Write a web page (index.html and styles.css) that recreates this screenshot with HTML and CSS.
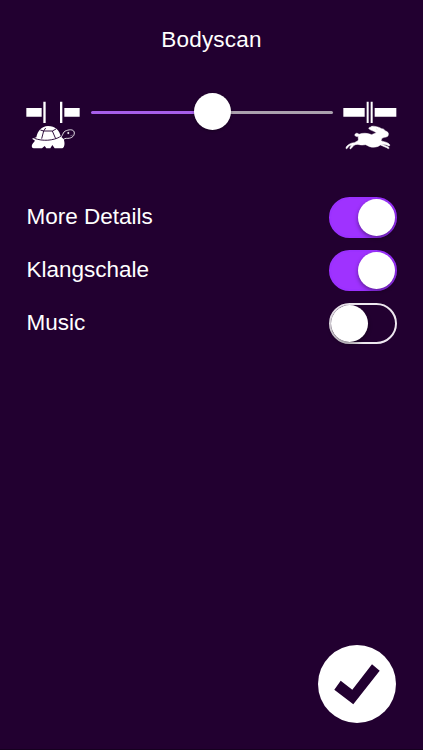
FILE: index.html
```html
<!DOCTYPE html>
<html lang="en">
<head>
<meta charset="utf-8">
<title>Bodyscan</title>
<link rel="stylesheet" href="styles.css">
</head>
<body>
<main class="screen">
  <h1 class="title">Bodyscan</h1>
  <section class="speed">
    <svg class="speed-icon" viewBox="18 18 162 147" aria-label="Slow">
      <g fill="#fff">
        <path d="M19 39h46v26H19zM70 20h7v64h-7zM120 20h7v64h-7zM133 39h46v26h-46z"/>
        <path d="M49 127C53 107 65 94 84 93C106 93 119 106 122 124L131 133C135 143 135 157 127 160H104L97 150L91 160H79L74 153L66 160H41C34 160 34 150 39 145L45 137L36 131Z"/>
      </g>
      <g fill="none" stroke="#220030" stroke-width="2.8">
        <path d="M61 105L71 108L65 131M71 108L77 99M71 108H97L108 102M97 108L107 131M43 130C68 139 99 138 123 124"/>
      </g>
      <path d="M119 128C129 127 127 109 139 107C151 102 163 104 163 114C163 126 151 131 139 130C132 130 128 137 121 137" fill="none" stroke="#fff" stroke-width="2.6"/>
      <path d="M143 112h4v4h-4zM151 122l9-2" fill="#fff" stroke="#fff" stroke-width="1"/>
    </svg>
    <div class="slider"><div class="knob"></div></div>
    <svg class="speed-icon" viewBox="16 18 162 147" aria-label="Fast">
      <g fill="#fff" stroke="#fff" stroke-linejoin="round">
        <path stroke="none" d="M17 39h64v26H17zM87 20h6v64h-6zM99 20h6v64h-6zM111 39h65v26h-65z"/>
        <path stroke-width="1.5" d="M52 118C55 113 60 114 64 118C76 113 87 114 102 119L116 113C107 107 94 105 93 99C98 93 112 97 120 105C115 97 99 98 101 94C109 92 124 96 132 101C139 101 142 106 143 108C152 110 155 117 150 124C144 128 136 126 132 131L130 137C139 141 151 141 156 149C157 154 153 154 148 150L131 147L151 155C158 161 153 163 147 158L128 150C120 157 107 158 96 155L84 149L73 150C62 149 57 146 49 151L41 160C37 164 35 160 38 156L42 150L34 153L29 160C25 163 23 160 27 154C34 147 41 143 50 143L61 137C64 133 60 129 62 124C55 126 50 123 52 118Z"/>
      </g>
    </svg>
  </section>
  <section class="options">
    <div class="option"><span class="label">More Details</span><div class="toggle on"></div></div>
    <div class="option"><span class="label">Klangschale</span><div class="toggle on"></div></div>
    <div class="option"><span class="label">Music</span><div class="toggle"></div></div>
  </section>
  <button class="confirm" aria-label="Confirm">
    <svg viewBox="0 0 78 78"><path d="M22.7 35.7L34.3 44.7L54 19.3L61.7 25.7L35.3 59.3L16.3 44.7Z" fill="#220030"/></svg>
  </button>
</main>
</body>
</html>
```
FILE: styles.css
```css
* { box-sizing: border-box; }
body { margin: 0; background: #220030; }
.screen {
  display: flex;
  flex-direction: column;
  height: 750px;
  padding: 26px 26px 26px;
  border-bottom: 1px solid #16001f;
  color: #fff;
  font: 22.5px/28px "Liberation Sans", sans-serif;
}
.title {
  margin: 0;
  font-size: 22.5px;
  font-weight: 400;
  letter-spacing: 0.2px;
  text-align: center;
}
.speed {
  display: flex;
  gap: 10.5px;
  height: 49px;
  margin-top: 47px;
}
.speed-icon { flex: none; width: 54px; height: 49px; }
.slider {
  display: flex;
  flex: 1;
  align-items: center;
  justify-content: center;
  height: 3px;
  margin-top: 10px;
  border-radius: 2px;
  background: linear-gradient(to right, #a75eea 50%, #aaa0ad 50%);
}
.knob {
  flex: none;
  width: 37px;
  height: 37px;
  margin: -2px 0 0 1px;
  border-radius: 50%;
  background: #fff;
  box-shadow: 0 1px 3px rgba(0, 0, 0, 0.35);
}
.options {
  display: grid;
  gap: 12px;
  margin-top: 47px;
}
.option {
  display: flex;
  align-items: center;
  justify-content: space-between;
  height: 41px;
}
.label { padding: 0 0 2px 0.5px; }
.toggle {
  display: flex;
  align-items: center;
  width: 68px;
  height: 41px;
  border: 2px solid #eee8f0;
  border-radius: 21px;
}
.toggle::before {
  content: "";
  width: 37px;
  height: 37px;
  border-radius: 50%;
  background: #fff;
  box-shadow: 0 2px 4px rgba(0, 0, 0, 0.4);
}
.toggle.on {
  justify-content: flex-end;
  border-color: #9b30ff;
  background: #9f32ff;
}
.confirm {
  align-self: flex-end;
  width: 78px;
  height: 78px;
  margin: auto 1px 0 0;
  padding: 0;
  border: 0;
  border-radius: 50%;
  background: #fff;
}
.confirm svg { display: block; }
```
